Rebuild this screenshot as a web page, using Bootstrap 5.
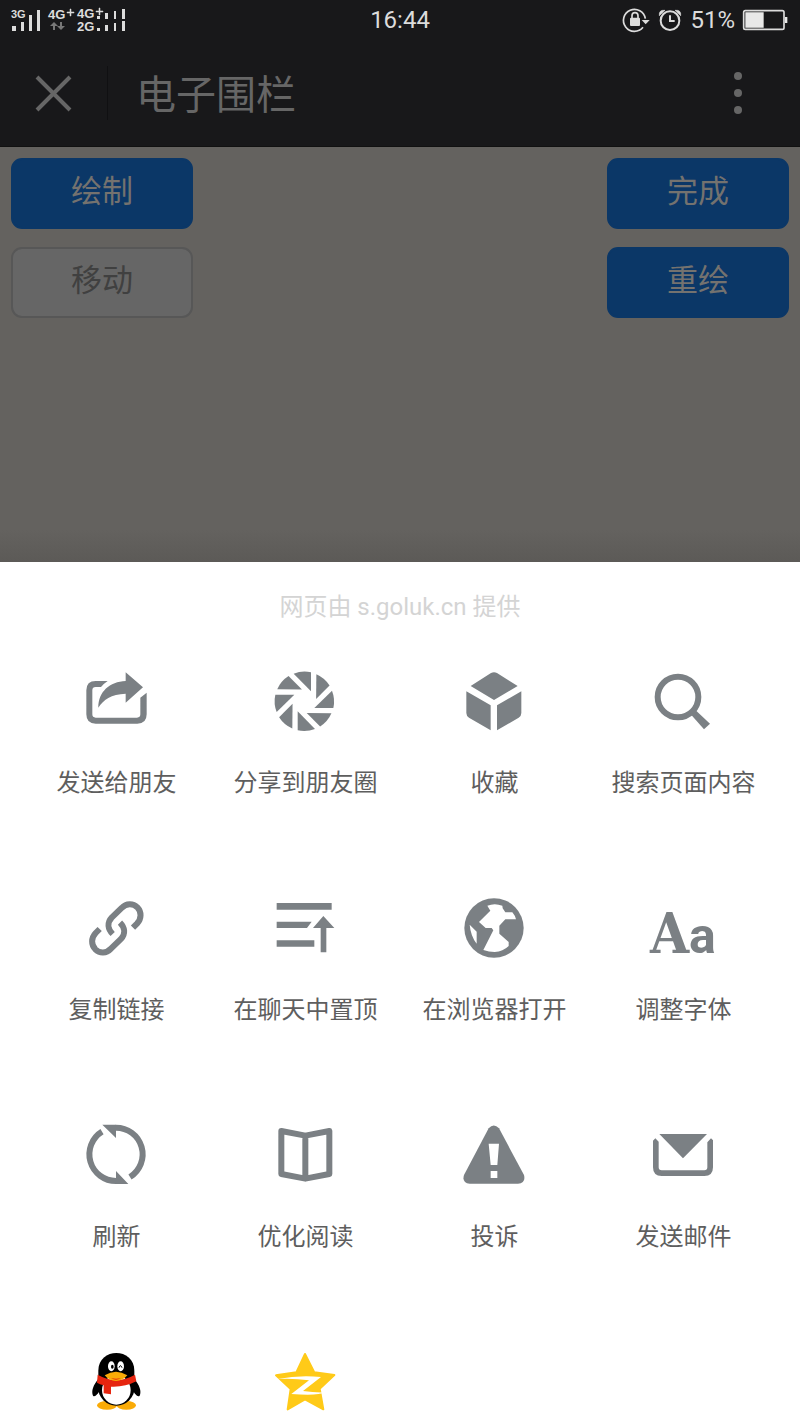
<!DOCTYPE html>
<html lang="zh-CN">
<head>
<meta charset="utf-8">
<meta name="viewport" content="width=device-width, initial-scale=1">
<title>电子围栏</title>
<link rel="stylesheet" href="https://cdn.jsdelivr.net/npm/bootstrap@5.3.0/dist/css/bootstrap.min.css">
<style>
  body { font-family: Roboto, "Noto Sans CJK SC", sans-serif; background: #64625f; }
  svg { display: block; flex: none; overflow: visible; }
  .top-area { background: #18181a; }
  .status-row { height: 40px; padding: 0 12px; color: #dcdcdc; font-size: 24px; line-height: 40px; }
  .status-side { flex: 1 1 0; }
  .title-row { height: 107px; padding: 0 26px 0 18px; color: #666; border-bottom: 1px solid #111; }
  .icon-btn { color: inherit; border: 0; padding: 0; }
  .title-rule { width: 1px; height: 54px; margin: 0 28px 0 18px; background: #101012; }
  .page-title { padding-top: 6px; font-size: 40px; line-height: 54px; font-weight: 400; }
  .canvas-area { padding: 11px; background: linear-gradient(to top, #5c5a57, #64625f 32px); }
  .tool-btn { width: 182px; height: 71px; padding: 0 0 4px; border-radius: 11px; font-size: 31px; line-height: 40px;
    --bs-btn-color: #74726f; --bs-btn-bg: #0b3767; --bs-btn-border-color: #0b3767; border-width: 2px; }
  .tool-btn-plain { --bs-btn-color: #404040; --bs-btn-bg: #666; --bs-btn-border-color: #575757; }
  .tool-col { gap: 18px; }
  .sheet { padding: 28px 22px 3px; background: #fff; }
  .sheet-note { margin-bottom: 42px; color: #d4d4d4; font-size: 24px; line-height: 34px; }
  .action-grid { display: grid; grid-template-columns: repeat(4, 1fr); row-gap: 94px; }
  .action { gap: 29px; color: #5e5e5e; font-size: 24px; line-height: 32px; white-space: nowrap; }
  .action svg { margin-right: 2px; fill: #7b8084; }
</style>
</head>
<body class="d-flex flex-column min-vh-100">

<header class="top-area">
  <div class="status-row d-flex align-items-center">
    <div class="status-side">
      <svg width="116" height="40" viewBox="12 0 116 40" fill="#dcdcdc" font-family="Liberation Sans, sans-serif" font-weight="700" font-size="13">
        <text x="11" y="18" font-size="11">3G</text>
        <path d="M12 26h4v5h-4zM21 22h3v9h-3zM29 15h3v16h-3zM37 10h3v21h-3z"/>
        <text x="48" y="19">4G</text>
        <path d="M67 12h3v-3h1v3h3v1h-3v3h-1v-3h-3z" stroke="#dcdcdc" stroke-width=".5"/>
        <path d="M54 22l4 4h-3v4h-2v-4h-3zM61 30l4-4h-3v-4h-2v4h-3z" fill="#777"/>
        <text x="77" y="18">4G</text>
        <text x="77" y="31">2G</text>
        <path d="M96 11h3V8h1v3h3v1h-3v3h-1v-3h-3z" stroke="#dcdcdc" stroke-width=".5"/>
        <path d="M97 16h3v3h-3zM105 13h3v6h-3zM114 11h2v8h-2zM122 9h3v10h-3zM97 28h3v3h-3zM105 25h3v6h-3zM114 23h2v8h-2zM122 21h3v10h-3z"/>
      </svg>
    </div>
    <div>16:44</div>
    <div class="status-side d-flex align-items-center justify-content-end">
      <svg width="27" height="26" viewBox="69 21 81 78" fill="none" stroke="#dcdcdc" stroke-width="5">
        <path d="M129 82A33 33 0 1 1 136 56"/><path d="M125 60h24l-12 13z" fill="#dcdcdc" stroke="none"/>
        <rect x="90" y="53" width="30" height="25" rx="3" fill="#dcdcdc" stroke="none"/><path d="M96 54v-7a9 9 0 0 1 18 0v7"/>
      </svg>
      <svg class="ms-2" width="24" height="23" viewBox="174 27 72 69" fill="none" stroke="#dcdcdc" stroke-width="6">
        <circle cx="210" cy="62" r="28"/><path d="M210 46v17h14"/>
        <path d="M178 47q-2-18 17-16zM242 47q2-18-17-16z" fill="#dcdcdc" stroke-width="2"/>
      </svg>
      <span class="mx-2">51%</span>
      <svg width="45" height="22" viewBox="432 27 135 66">
        <rect x="434" y="32" width="121" height="56" rx="5" fill="none" stroke="#dcdcdc" stroke-width="5"/>
        <path d="M439 37h55v46h-55zM558 51h7v18h-7z" fill="#e8e8e8"/>
      </svg>
    </div>
  </div>
  <div class="title-row d-flex align-items-center">
    <button class="btn icon-btn" type="button" aria-label="关闭">
      <svg width="71" height="48" viewBox="0 0 71 48" stroke="currentColor" stroke-width="4"><path d="M19 8l33 33M52 8L19 41"/></svg>
    </button>
    <div class="title-rule"></div>
    <h1 class="page-title mb-0">电子围栏</h1>
    <button class="btn icon-btn ms-auto" type="button" aria-label="更多">
      <svg width="72" height="48" viewBox="0 0 72 48" fill="currentColor"><circle cx="36" cy="7" r="4"/><circle cx="36" cy="24" r="4"/><circle cx="36" cy="41" r="4"/></svg>
    </button>
  </div>
</header>

<main class="canvas-area flex-grow-1 d-flex justify-content-between">
  <div class="tool-col d-flex flex-column">
    <button class="btn tool-btn" type="button">绘制</button>
    <button class="btn tool-btn tool-btn-plain" type="button">移动</button>
  </div>
  <div class="tool-col d-flex flex-column">
    <button class="btn tool-btn" type="button">完成</button>
    <button class="btn tool-btn" type="button">重绘</button>
  </div>
</main>

<section class="sheet">
  <p class="sheet-note text-center">网页由 s.goluk.cn 提供</p>
  <div class="action-grid">
    <button class="action btn icon-btn d-flex flex-column align-items-center" type="button">
      <svg width="72" height="72" viewBox="121 48 216 216"><path d="M204 93H168Q140 93 140 121V193Q140 221 168 221H293Q321 221 321 193V128L302 143V193Q302 203 292 203H168Q158 203 158 193V121Q158 111 168 111H184Q192 101 204 93ZM258 67L310 112L258 158V131C215 132 190 150 176 173C176 125 210 95 258 93Z"/></svg>
      <span>发送给朋友</span>
    </button>
    <button class="action btn icon-btn d-flex flex-column align-items-center" type="button">
      <svg width="72" height="72" viewBox="-106 -106 216 216">
        <defs><path id="blade" d="M-32 -83A89 89 0 0 1 20 -87V-30Z"/></defs>
        <use href="#blade"/><use href="#blade" transform="rotate(45)"/><use href="#blade" transform="rotate(90)"/><use href="#blade" transform="rotate(135)"/><use href="#blade" transform="rotate(180)"/><use href="#blade" transform="rotate(225)"/><use href="#blade" transform="rotate(270)"/><use href="#blade" transform="rotate(315)"/>
      </svg>
      <span>分享到朋友圈</span>
    </button>
    <button class="action btn icon-btn d-flex flex-column align-items-center" type="button">
      <svg width="72" height="72" viewBox="145 48 216 216"><path d="M183 108L244 69Q253 65 262 69L324 108L253 150ZM170 124L243 166V241L178 203Q170 198 170 189ZM335 124L262 166V241L327 203Q335 198 335 189Z"/></svg>
      <span>收藏</span>
    </button>
    <button class="action btn icon-btn d-flex flex-column align-items-center" type="button">
      <svg width="72" height="72" viewBox="712 48 216 216"><circle cx="805" cy="141" r="61" fill="none" stroke="#7b8084" stroke-width="18"/><path d="M858 181L901 221L883 238L845 195Z"/></svg>
      <span>搜索页面内容</span>
    </button>

    <button class="action btn icon-btn d-flex flex-column align-items-center" type="button">
      <svg width="72" height="72" viewBox="121 39 216 216"><g fill="none" stroke="#7b8084" stroke-width="18"><path d="M219 162C204 147 202 128 216 113L246 84C260 69 280 69 293 82C306 96 306 116 292 131L280 143"/><path d="M241 128C256 143 258 162 244 177L214 206C200 221 180 221 167 208C154 194 154 174 168 159L180 147"/></g></svg>
      <span>复制链接</span>
    </button>
    <button class="action btn icon-btn d-flex flex-column align-items-center" type="button">
      <svg width="72" height="72" viewBox="688 39 216 216"><path d="M711 69H876V89H711ZM711 125H816L802 144H711ZM711 181H824V200H711ZM851 108L884 144H860V217H843V144H820Z"/></svg>
      <span>在聊天中置顶</span>
    </button>
    <button class="action btn icon-btn d-flex flex-column align-items-center" type="button">
      <svg width="72" height="72" viewBox="145 39 216 216"><circle cx="253" cy="144" r="89"/><path fill="#fff" d="M233 77Q255 68 278 77L279 85L287 97H308Q316 106 319 118H287L269 137V161L297 186V198Q280 215 255 216Q238 216 221 210L251 151L246 144H228L208 126L242 92ZM180 134L201 155V191Q183 168 180 134Z"/></svg>
      <span>在浏览器打开</span>
    </button>
    <button class="action btn icon-btn d-flex flex-column align-items-center" type="button">
      <svg width="72" height="72" viewBox="0 0 72 72" font-weight="700"><text x="3" y="60" font-family="DejaVu Serif Condensed, DejaVu Serif, serif" font-size="56">A</text><text x="42" y="60" font-family="Roboto, sans-serif" font-size="50">a</text></svg>
      <span>调整字体</span>
    </button>

    <button class="action btn icon-btn d-flex flex-column align-items-center" type="button">
      <svg width="72" height="72" viewBox="121 30 216 216"><path fill="none" stroke="#7b8084" stroke-width="18" d="M228 53A80 80 0 0 1 271 201M230 213A80 80 0 0 1 187 65"/><path d="M188 44H229V84ZM266 222H229V183Z"/></svg>
      <span>刷新</span>
    </button>
    <button class="action btn icon-btn d-flex flex-column align-items-center" type="button">
      <svg width="72" height="72" viewBox="688 30 216 216"><path fill="none" stroke="#7b8084" stroke-width="18" stroke-linejoin="round" d="M725 63L797 77L869 63V192L797 206L725 192ZM797 77V206"/></svg>
      <span>优化阅读</span>
    </button>
    <button class="action btn icon-btn d-flex flex-column align-items-center" type="button">
      <svg width="72" height="72" viewBox="145 30 216 216"><path d="M237 55Q252 38 268 55L343 195Q349 220 325 221H180Q156 220 163 195Z"/><path fill="#fff" d="M237 101H268L263 165H243ZM243 183H263V204H243Z"/></svg>
      <span>投诉</span>
    </button>
    <button class="action btn icon-btn d-flex flex-column align-items-center" type="button">
      <svg width="72" height="72" viewBox="712 30 216 216"><path d="M749 72H892L820 145ZM737 85L747 95V172Q747 181 756 181H884Q893 181 893 172V97L904 85L910 91V172Q910 198 884 198H756Q730 198 730 172V92Z"/></svg>
      <span>发送邮件</span>
    </button>

    <button class="action btn icon-btn d-flex flex-column align-items-center" type="button" aria-label="QQ">
      <svg width="72" height="72" viewBox="31 51 216 216">
        <g fill="#faab07"><ellipse cx="112" cy="226" rx="30" ry="13"/><ellipse cx="170" cy="226" rx="29" ry="13"/></g>
        <g fill="#000"><path d="M86 145V122C86 51 194 51 194 122V145Z"/><ellipse cx="140" cy="172" rx="55" ry="55"/><path d="M88 145C70 165 64 185 70 197C76 203 84 192 92 180ZM192 145C210 165 216 185 210 197C204 203 196 192 188 180Z"/></g>
        <g fill="#fff"><ellipse cx="140" cy="180" rx="43" ry="44"/><ellipse cx="125" cy="109" rx="10" ry="15"/><ellipse cx="153" cy="109" rx="10" ry="15"/></g>
        <ellipse cx="128" cy="110" rx="4" ry="6" fill="#000"/><path d="M148 113Q152 101 157 113" fill="none" stroke="#000" stroke-width="3"/>
        <path fill="#e6250f" d="M84 134Q140 166 196 134L200 154Q165 172 124 170V193L102 190V166Q90 163 82 158Z"/>
        <path fill="#faab07" d="M105 136Q139 115 173 136Q160 152 139 153Q118 152 105 136Z"/><path fill="#e6250f" d="M124 144Q139 148 154 144Q139 155 124 144Z"/>
      </svg>
    </button>
    <button class="action btn icon-btn d-flex flex-column align-items-center" type="button" aria-label="QQ空间">
      <svg width="72" height="72" viewBox="598 51 216 216">
        <path fill="#ffca18" stroke="#ffca18" stroke-width="6" stroke-linejoin="round" d="M706 72L734 127L794 135L750 176L761 238L706 208L654 238L663 177L619 136L680 127Z"/>
        <path fill="#fff" d="M624 147Q690 134 754 141L700 183Q735 188 766 187Q745 198 665 192L718 151Q670 144 624 147Z"/>
      </svg>
    </button>
  </div>
</section>

<script src="https://cdn.jsdelivr.net/npm/bootstrap@5.3.0/dist/js/bootstrap.bundle.min.js"></script>
</body>
</html>
